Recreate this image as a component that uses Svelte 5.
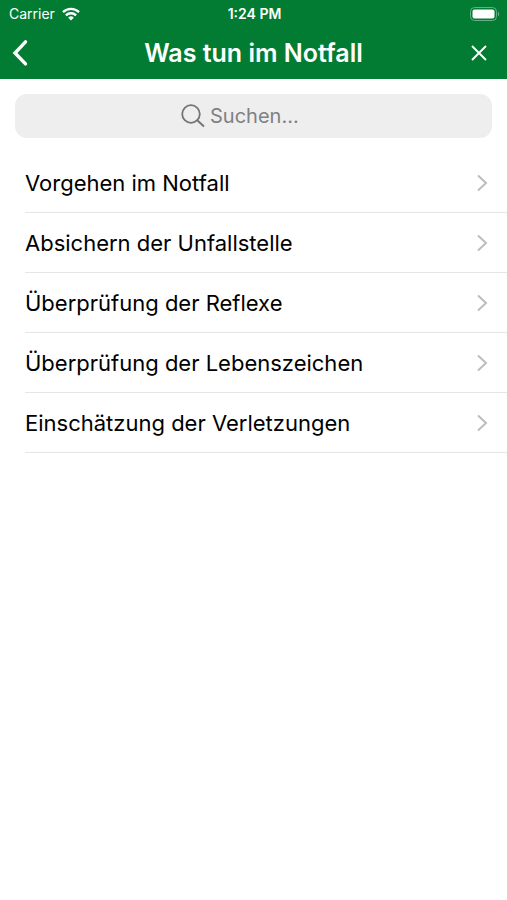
<script>
  const topics = [
    'Vorgehen im Notfall',
    'Absichern der Unfallstelle',
    'Überprüfung der Reflexe',
    'Überprüfung der Lebenszeichen',
    'Einschätzung der Verletzungen'
  ];
</script>

<div class="screen">
  <header>
    <div class="status">
      <span class="carrier">Carrier
        <svg width="18" height="14" viewBox="0 0 18 14" aria-hidden="true">
          <g fill="none" stroke="#fff" stroke-width="2.4">
            <path d="M1 5.2a11.4 11.4 0 0 1 16 0" />
            <path d="M3.9 8.3a7.3 7.3 0 0 1 10.2 0" />
          </g>
          <path fill="#fff" d="M9 13.6 6.2 10.7a4 4 0 0 1 5.6 0z" />
        </svg>
      </span>
      <span class="time">1:24 PM</span>
      <svg class="battery" width="30" height="14" viewBox="0 0 30 14" aria-hidden="true">
        <rect x=".5" y=".5" width="26" height="13" rx="4" fill="none" stroke="#67b084" />
        <rect x="2.500" y="2.500" width="22" height="9" rx="2" fill="#fff" />
        <path d="M28 4.500q2.500 2.500 0 5z" fill="#67b084" />
      </svg>
    </div>
    <div class="bar">
      <button class="back" aria-label="Zurück">
        <svg width="16" height="28" viewBox="0 0 16 28"><path d="M13.500 2.800 3 14l10.500 10.900" fill="none" stroke="#fff" stroke-width="3.4" stroke-linecap="round" /></svg>
      </button>
      <h1>Was tun im Notfall</h1>
      <button class="close" aria-label="Schließen">
        <svg width="16" height="16" viewBox="0 0 16 16"><path d="M1 1l14 14M15 1 1 15" stroke="#fff" stroke-width="1.9" /></svg>
      </button>
    </div>
  </header>

  <main>
    <label class="search">
      <svg width="24" height="24" viewBox="0 0 24 24" aria-hidden="true">
        <g fill="none" stroke="#757577" stroke-width="1.8"><circle cx="10" cy="10" r="8.800" /><path d="m16.200 16.200 6.800 6.300" stroke-width="2" /></g>
      </svg>
      <input type="text" placeholder="Suchen..." aria-label="Suchen" />
    </label>
    <ul>
      {#each topics as topic}
        <li>
          <a href="#top">
            <span>{topic}</span>
            <svg width="12" height="18" viewBox="0 0 12 18" aria-hidden="true"><path d="m2 1.500 8 7.500-8 7.500" fill="none" stroke="#bdbdbf" stroke-width="2" /></svg>
          </a>
        </li>
      {/each}
    </ul>
  </main>
</div>

<style>
  :global(body) { background: #fff; }
  .screen { font-family: Inter, "Liberation Sans", sans-serif; color: #000; }
  header { background: #027c32; color: #fff; }
  .status {
    display: grid;
    grid-template-columns: 1fr auto 1fr;
    align-items: center;
    height: 27px;
    padding: 0 7px 0 9px;
    font-size: 14px;
    line-height: 27px;
  }
  .carrier { display: flex; align-items: center; gap: 7px; }
  .time { font-weight: 600; }
  .battery { justify-self: end; }
  .bar {
    display: grid;
    grid-template-columns: 56px 1fr 56px;
    align-items: center;
    height: 52px;
  }
  h1 { margin: 0; text-align: center; font-size: 25px; line-height: 32px; font-weight: 600; white-space: nowrap; }
  button { display: flex; align-items: center; height: 44px; padding: 0 12px; border: 0; background: none; cursor: pointer; }
  .close { justify-content: flex-end; padding-right: 20px; }
  .search {
    display: flex;
    justify-content: center;
    align-items: center;
    gap: 5px;
    height: 44px;
    margin: 15px 15px 15px;
    border-radius: 12px;
    background: #eee;
  }
  input { width: 116px; padding: 0; border: 0; outline: 0; background: none; font: 20px/28px Inter, "Liberation Sans", sans-serif; }
  input::placeholder { color: #808082; opacity: 1; }
  ul { margin: 0; padding: 0 0 0 25px; list-style: none; }
  li { border-bottom: 1px solid #e6e6e7; }
  a {
    display: flex;
    align-items: center;
    justify-content: space-between;
    height: 59px;
    padding-right: 19px;
    color: inherit;
    font-size: 22px;
    line-height: 30px;
    text-decoration: none;
  }
</style>
